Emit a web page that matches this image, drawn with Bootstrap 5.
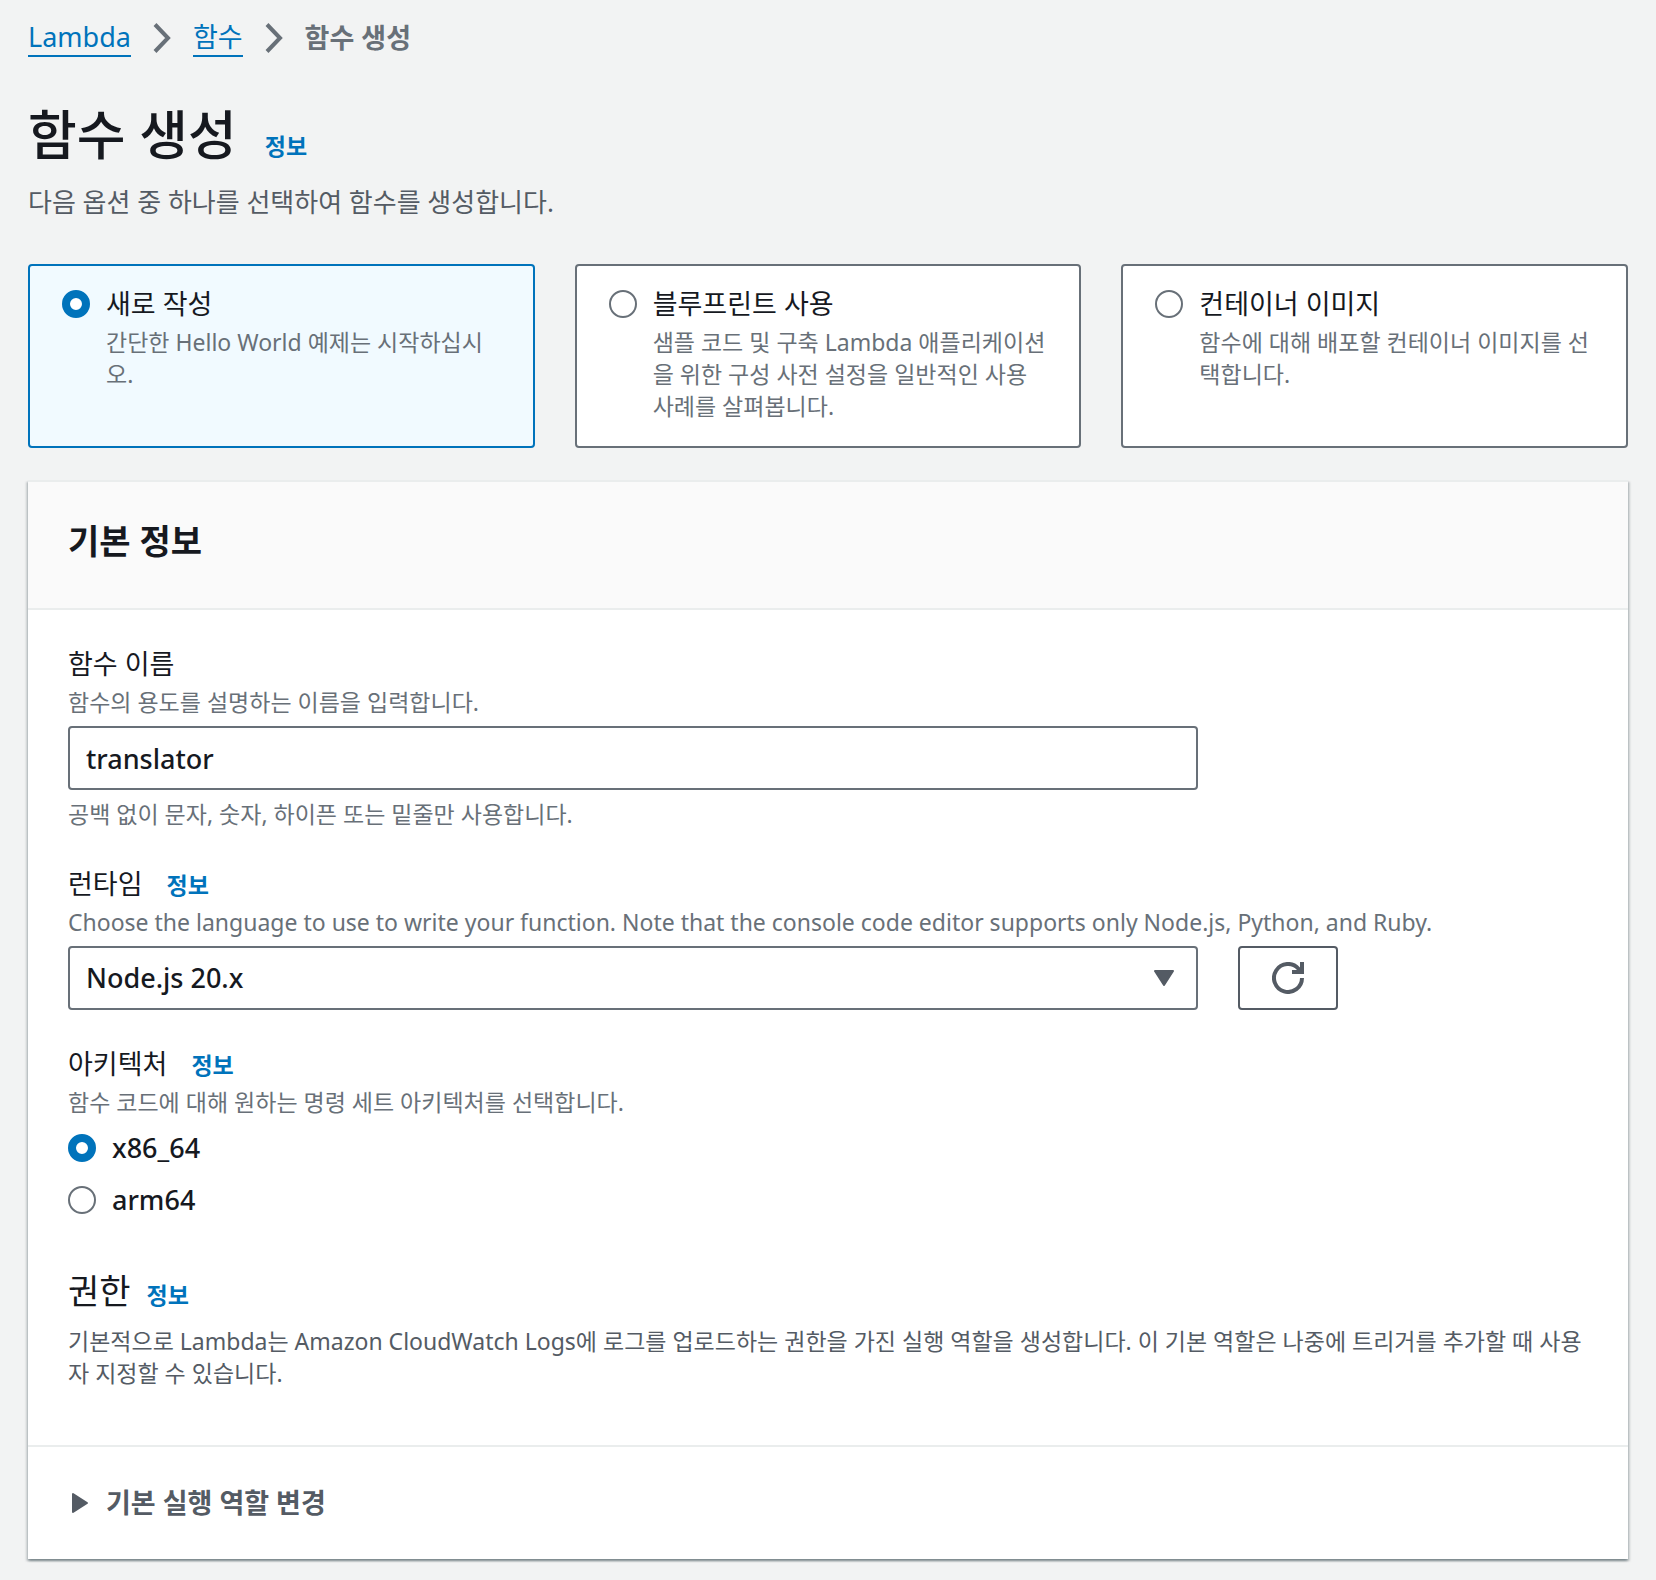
<!DOCTYPE html>
<html lang="ko">
<head>
<meta charset="utf-8">
<meta name="viewport" content="width=device-width, initial-scale=1">
<title>함수 생성 - Lambda</title>
<link href="https://cdn.jsdelivr.net/npm/bootstrap@5.3.0/dist/css/bootstrap.min.css" rel="stylesheet">
<style>
  :root { --ink: #16191f; --slate: #545b64; --muted: #687078; --blue: #0073bb; --rule: #eaeded; }
  body { background: #f2f3f3; color: var(--ink); font-family: "Noto Sans", "Noto Sans CJK KR", sans-serif; font-size: 27px; line-height: 44px; }
  .page-shell { padding: 16px 28px 20px; }
  .crumbs { gap: 22px; margin-bottom: 36px; }
  .crumbs a { color: var(--blue); text-decoration: none; line-height: 36px; border-bottom: 2px solid var(--blue); }
  .crumbs .here { color: var(--muted); font-weight: 700; }
  .info-link { color: var(--blue); font-size: 23px; line-height: 24px; font-weight: 700; text-decoration: none; }
  .page-title { font-size: 53px; line-height: 78px; font-weight: 500; }
  .intro { color: var(--slate); font-size: 26px; line-height: 40px; margin: 8px 0 42px; }
  .tile-grid { --bs-gutter-x: 40px; --bs-gutter-y: 40px; }
  .tile { background: #fff; border: 2px solid var(--muted); border-radius: 4px; padding: 16px 32px 24px; gap: 16px; cursor: pointer; }
  .tile:has(input:checked) { background: #f1faff; border-color: var(--blue); }
  .hint { color: var(--muted); font-size: 23px; line-height: 32px; }
  .hint-dark { color: var(--slate); }
  .radio-dot.form-check-input { width: 28px; height: 28px; margin: 8px 0 0; flex: none; float: none; background: #fff; border: 2px solid var(--muted); }
  .radio-dot.form-check-input:checked { background: #fff; border: 8px solid var(--blue); }
  .panel { background: #fff; margin-top: 32px; border-top: 2px solid var(--rule); box-shadow: 0 2px 2px rgba(0,28,36,.3), 2px 2px 2px rgba(0,28,36,.15), -2px 2px 2px rgba(0,28,36,.15); }
  .panel-head { background: #fafafa; border-bottom: 2px solid var(--rule); padding: 37px 40px 45px; }
  .panel-head h2 { font-size: 34px; line-height: 44px; font-weight: 700; }
  .panel-main { padding: 32px 40px 56px; }
  .panel-foot { border-top: 2px solid var(--rule); padding: 34px 40px; }
  .field-block { margin-bottom: 32px; }
  .field-grid { --bs-gutter-x: 40px; }
  .box { height: 64px; border: 2px solid var(--muted); border-radius: 4px; padding: 0 16px; font-size: 27px; font-weight: 500; color: var(--ink); background-color: #fff; }
  select.box { background-image: url("data:image/svg+xml,%3Csvg xmlns='http://www.w3.org/2000/svg' viewBox='0 0 20 16'%3E%3Cpath d='M1 1h18l-9 14z' fill='%23545b64' stroke='%23545b64' stroke-width='2' stroke-linejoin='round'/%3E%3C/svg%3E"); background-size: 20px 16px; background-position: right 22px center; }
  .refresh-btn { width: 100px; height: 64px; border: 2px solid var(--slate); border-radius: 4px; background: #fff; color: var(--slate); }
  .perm-head { margin: 40px 0 4px; }
  .section-title { font-size: 34px; line-height: 59px; font-weight: 400; }
  .expander { border: 0; background: none; padding: 0; color: var(--slate); font-weight: 700; gap: 16px; }
</style>
</head>
<body>
<main class="page-shell container-fluid">
  <nav class="crumbs d-flex align-items-center" aria-label="breadcrumb">
    <a href="#">Lambda</a>
    <svg width="18" height="30" viewBox="0 0 18 30" fill="none" stroke="#687078" stroke-width="4" aria-hidden="true"><path d="M2 1.500 15 15 2 28.500"/></svg>
    <a href="#">함수</a>
    <svg width="18" height="30" viewBox="0 0 18 30" fill="none" stroke="#687078" stroke-width="4" aria-hidden="true"><path d="M2 1.500 15 15 2 28.500"/></svg>
    <span class="here" aria-current="page">함수 생성</span>
  </nav>

  <div class="d-flex align-items-baseline gap-4">
    <h1 class="page-title mb-0 me-1">함수 생성</h1>
    <a href="#" class="info-link">정보</a>
  </div>
  <p class="intro">다음 옵션 중 하나를 선택하여 함수를 생성합니다.</p>

  <div class="row tile-grid row-cols-1 row-cols-lg-3" role="radiogroup" aria-label="함수 생성">
    <div class="col">
      <label class="tile d-flex h-100" for="mode-new">
        <input class="form-check-input radio-dot" type="radio" name="mode" id="mode-new" checked>
        <span><span class="d-block">새로 작성</span><span class="hint d-block">간단한 Hello World 예제는 시작하십시오.</span></span>
      </label>
    </div>
    <div class="col">
      <label class="tile d-flex h-100" for="mode-blueprint">
        <input class="form-check-input radio-dot" type="radio" name="mode" id="mode-blueprint">
        <span><span class="d-block">블루프린트 사용</span><span class="hint d-block">샘플 코드 및 구축 Lambda 애플리케이션을 위한 구성 사전 설정을 일반적인 사용 사례를 살펴봅니다.</span></span>
      </label>
    </div>
    <div class="col">
      <label class="tile d-flex h-100" for="mode-image">
        <input class="form-check-input radio-dot" type="radio" name="mode" id="mode-image">
        <span><span class="d-block">컨테이너 이미지</span><span class="hint d-block">함수에 대해 배포할 컨테이너 이미지를 선택합니다.</span></span>
      </label>
    </div>
  </div>

  <section class="panel">
    <header class="panel-head"><h2 class="mb-0">기본 정보</h2></header>
    <div class="panel-main">
      <div class="field-block">
        <label class="d-block" for="fn-name">함수 이름</label>
        <div class="hint mb-2" id="fn-desc">함수의 용도를 설명하는 이름을 입력합니다.</div>
        <div class="row field-grid"><div class="col-9">
          <input class="form-control box" type="text" id="fn-name" value="translator" aria-describedby="fn-desc fn-rule">
        </div></div>
        <div class="hint mt-2" id="fn-rule">공백 없이 문자, 숫자, 하이픈 또는 밑줄만 사용합니다.</div>
      </div>

      <div class="field-block">
        <div class="d-flex align-items-baseline gap-4">
          <label for="runtime">런타임</label><a href="#" class="info-link">정보</a>
        </div>
        <div class="hint mb-2">Choose the language to use to write your function. Note that the console code editor supports only Node.js, Python, and Ruby.</div>
        <div class="row field-grid">
          <div class="col-9"><select class="form-select box" id="runtime"><option>Node.js 20.x</option></select></div>
          <div class="col-3">
            <button type="button" class="refresh-btn d-flex align-items-center justify-content-center" aria-label="새로 고침">
              <svg width="32" height="32" viewBox="0 0 32 32" fill="none" stroke="currentColor" stroke-width="4" aria-hidden="true"><path d="M30 16A14 14 0 1 1 26.500 6.700L29 10"/><path d="M30 0v10H20"/></svg>
            </button>
          </div>
        </div>
      </div>

      <div role="radiogroup" aria-labelledby="arch-label">
        <div class="d-flex align-items-baseline gap-4">
          <span id="arch-label">아키텍처</span><a href="#" class="info-link">정보</a>
        </div>
        <div class="hint mb-2">함수 코드에 대해 원하는 명령 세트 아키텍처를 선택합니다.</div>
        <div class="d-flex gap-3 mb-2">
          <input class="form-check-input radio-dot" type="radio" name="arch" id="arch-x86" checked><label class="fw-medium" for="arch-x86">x86_64</label>
        </div>
        <div class="d-flex gap-3">
          <input class="form-check-input radio-dot" type="radio" name="arch" id="arch-arm"><label class="fw-medium" for="arch-arm">arm64</label>
        </div>
      </div>

      <div class="perm-head d-flex align-items-baseline gap-3">
        <h3 class="section-title mb-0">권한</h3><a href="#" class="info-link">정보</a>
      </div>
      <p class="hint hint-dark mb-0">기본적으로 Lambda는 Amazon CloudWatch Logs에 로그를 업로드하는 권한을 가진 실행 역할을 생성합니다. 이 기본 역할은 나중에 트리거를 추가할 때 사용자 지정할 수 있습니다.</p>
    </div>
    <div class="panel-foot">
      <button type="button" class="expander d-flex align-items-center" aria-expanded="false">
        <svg width="22" height="22" viewBox="0 0 22 22" fill="#545b64" stroke="#545b64" stroke-width="2" stroke-linejoin="round" aria-hidden="true"><path d="M5 2v18l14-9z"/></svg>
        기본 실행 역할 변경
      </button>
    </div>
  </section>
</main>
<script src="https://cdn.jsdelivr.net/npm/bootstrap@5.3.0/dist/js/bootstrap.bundle.min.js"></script>
</body>
</html>
